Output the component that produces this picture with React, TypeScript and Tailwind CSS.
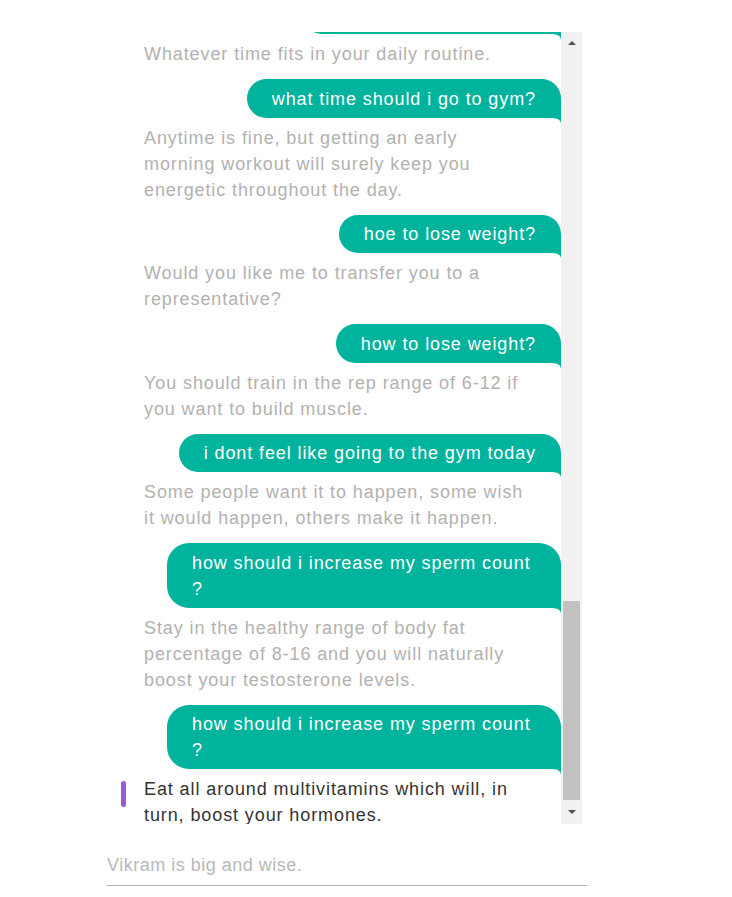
import React from 'react';

type Msg = { from: 'user' | 'bot'; text: string; active?: boolean };

const messages: Msg[] = [
  { from: 'user', text: 'hello' },
  { from: 'bot', text: 'Hi there! How can I help you with your fitness today?' },
  { from: 'user', text: 'when should i workout?' },
  { from: 'bot', text: 'Whatever time fits in your daily routine.' },
  { from: 'user', text: 'what time should i go to gym?' },
  { from: 'bot', text: 'Anytime is fine, but getting an early morning workout will surely keep you energetic throughout the day.' },
  { from: 'user', text: 'hoe to lose weight?' },
  { from: 'bot', text: 'Would you like me to transfer you to a representative?' },
  { from: 'user', text: 'how to lose weight?' },
  { from: 'bot', text: 'You should train in the rep range of 6-12 if you want to build muscle.' },
  { from: 'user', text: 'i dont feel like going to the gym today' },
  { from: 'bot', text: 'Some people want it to happen, some wish it would happen, others make it happen.' },
  { from: 'user', text: 'how should i increase my sperm count ?' },
  { from: 'bot', text: 'Stay in the healthy range of body fat percentage of 8-16 and you will naturally boost your testosterone levels.' },
  { from: 'user', text: 'how should i increase my sperm count ?' },
  { from: 'bot', text: 'Eat all around multivitamins which will, in turn, boost your hormones.', active: true },
];

function UserBubble({ text }: { text: string }) {
  return (
    <div className="flex justify-end mt-[12px]">
      <div className="relative max-w-[394px] bg-[#00b39d] text-white text-[18px] leading-[26px] tracking-[0.9px] px-[25px] pt-[6.5px] pb-[6px] rounded-[22px] rounded-br-none">
        {text}
        <svg className="absolute right-0 top-full" width="9" height="6" viewBox="0 0 9 6">
          <path d="M0 0 H9 V6 Q9 0 0 0 Z" fill="#00b39d" />
        </svg>
      </div>
    </div>
  );
}

function BotText({ text, active }: { text: string; active?: boolean }) {
  return (
    <div className="flex mt-[7px]">
      <div className="w-[37px] shrink-0 flex">
        {active && <div className="ml-[14px] mt-[5px] w-[5px] h-[26px] rounded-full bg-[#9b59d6]" />}
      </div>
      <p className={`max-w-[387px] text-[18px] leading-[26px] tracking-[0.9px] ${active ? 'text-[#333333]' : 'text-[#b3b1b0]'}`}>{text}</p>
    </div>
  );
}

function Scrollbar() {
  return (
    <div className="w-[21px] shrink-0 bg-[#f1f1f1] flex flex-col items-center">
      <div className="h-[22px] w-full flex items-center justify-center">
        <div className="w-0 h-0 border-x-[4px] border-x-transparent border-b-[4px] border-b-[#505050]" />
      </div>
      <div className="flex-1 w-full flex flex-col justify-end px-[2px]">
        <div className="h-[199px] bg-[#c1c1c1]" />
      </div>
      <div className="h-[24px] w-full flex items-center justify-center">
        <div className="w-0 h-0 border-x-[4px] border-x-transparent border-t-[4px] border-t-[#505050]" />
      </div>
    </div>
  );
}

export default function App() {
  return (
    <div className="w-[732px] h-[897px] bg-white font-['Liberation_Sans',Arial,sans-serif]">
      <div className="pl-[107px] pt-[32px] w-[587px]">
        <div className="flex h-[792px] w-[475px]">
          <div className="flex-1 overflow-hidden flex flex-col justify-end">
            <div className="-mb-[4px]">
              {messages.map((m, i) =>
                m.from === 'user' ? <UserBubble key={i} text={m.text} /> : <BotText key={i} text={m.text} active={m.active} />
              )}
            </div>
          </div>
          <Scrollbar />
        </div>
        <div className="mt-[28px] pb-[7px] border-b border-[#b0b0b0] w-[480px]">
          <p className="text-[18px] leading-[26px] tracking-[0.5px] text-[#b8b8b8]">Vikram is big and wise.</p>
        </div>
      </div>
    </div>
  );
}
